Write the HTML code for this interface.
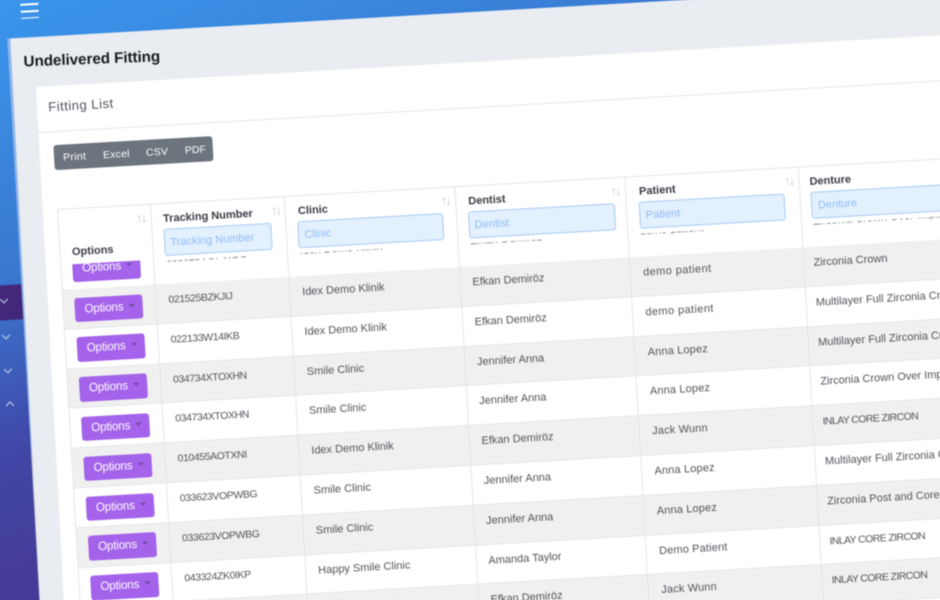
<!DOCTYPE html>
<html><head><meta charset="utf-8"><style>
html,body{margin:0;padding:0;width:940px;height:600px;overflow:hidden}
#s{position:relative;width:940px;height:600px;overflow:hidden;background:linear-gradient(159deg,#3a96ec 0,#3a78d0 29%,#4048a8 47%,#463a98 62%,#463a98 100%);font-family:"Liberation Sans",sans-serif}
#w{position:absolute;left:0;top:0;width:1300px;height:900px;transform-origin:0 0;transform:matrix(.9984,-.0572,.0572,.9984,0,0);filter:blur(.4px)}
#w div{position:absolute;box-sizing:border-box;white-space:nowrap}
.h{left:20px;width:18px;height:1.5px;background:#fff}
.r{left:45px;width:1200px;height:39.8px;border-bottom:1px solid #e4e6e9;background:#fff}
.g{background:#f0f0f0}
.b{left:11.7px;top:8.5px;width:68px;height:24.5px;background:#a463ea;border-radius:3px;color:#fff;font-size:11.5px;line-height:24px;padding-left:10px;letter-spacing:-.1px}
.b i{position:absolute;left:54px;top:9px;width:0;height:0;border:3.5px solid transparent;border-top:3.5px solid #6b4a9e;border-bottom:0}
.c{top:8px;line-height:16px;font-size:11px;color:#50545b;letter-spacing:0}
.c1{left:106px;font-size:10.5px;letter-spacing:-.4px}.c2{left:240px}.c3{left:410.5px}.c4{left:581.5px;letter-spacing:.15px}.c5{left:752.2px}
.u{font-size:10.5px;letter-spacing:-.6px}
.t{top:0;line-height:16px;font-size:11px;font-weight:bold;color:#373b44;letter-spacing:0}
.in{top:237.5px;height:27px;background:#e3f0fe;border:1px solid #a6cbf5;border-radius:3px;color:#8fbcf5;font-size:11px;line-height:26px;padding-left:5.5px;letter-spacing:0}
.ch{width:5.5px;height:5.5px;border-right:1px solid #c9d8f0;border-bottom:1px solid #c9d8f0;transform:rotate(45deg)}
.so{top:219px;font-size:13px;line-height:14px;color:#c6cacf;width:14px;text-align:center;letter-spacing:-2px}
.x{top:270px;width:140px;height:1.8px;overflow:hidden}
.x .c{left:0;top:-9.9px;color:#70747a}
</style></head><body><div id="s"><div id="w">
<div class="h" style="top:5px"></div><div class="h" style="top:12px"></div><div class="h" style="top:18.5px"></div>
<div style="left:-30px;top:285px;width:36px;height:35px;background:#42277a"></div>
<div class="ch" style="left:-16.5px;top:296px"></div>
<div class="ch" style="left:-16.5px;top:332px"></div>
<div class="ch" style="left:-16.5px;top:366px"></div>
<div class="ch" style="left:-16.5px;top:403px;transform:rotate(225deg)"></div>
<div style="left:5px;top:38.5px;width:3px;height:415px;background:#8fb4e6"></div>
<div style="left:4.5px;top:453px;width:1.5px;height:300px;background:#b9bcc4"></div>
<div style="left:4px;top:38.5px;width:1300px;height:900px;background:#e9ecf1;clip-path:polygon(4px 0,100% 0,100% 100%,0 100%)"></div>
<div style="left:19.5px;top:55px;font-size:15.2px;line-height:20px;font-weight:bold;color:#16181c;letter-spacing:-.05px;transform:rotate(1.1deg)">Undelivered Fitting</div>
<div style="left:28.5px;top:89px;width:1300px;height:900px;background:#fff;clip-path:polygon(2.5px 0,100% 0,100% 100%,0 100%)"></div>
<div style="left:30px;top:134px;width:1300px;height:1px;background:#e4e6ea"></div>
<div style="left:42px;top:100.5px;font-size:13.2px;line-height:18px;color:#4d5460;letter-spacing:.45px">Fitting List</div>
<div style="left:45px;top:148px;width:158.5px;height:25px;background:#6c757d;border-radius:3px"></div>
<div style="left:54px;top:153.5px;font-size:10.5px;line-height:15px;color:#fff;letter-spacing:.3px">Print</div>
<div style="left:94px;top:153.5px;font-size:10.5px;line-height:15px;color:#fff;letter-spacing:.2px">Excel</div>
<div style="left:137px;top:153.5px;font-size:10.5px;line-height:15px;color:#fff;letter-spacing:.2px">CSV</div>
<div style="left:176px;top:153.5px;font-size:10.5px;line-height:15px;color:#fff;letter-spacing:0">PDF</div>

<div style="left:0;top:293px;width:1300px;height:500px">
<div class="r g" style="top:0"><div class="b">Options<i></i></div><div class="c c1">021525BZKJIJ</div><div class="c c2">Idex Demo Klinik</div><div class="c c3">Efkan Demiröz</div><div class="c c4" style="letter-spacing:.4px">demo patient</div><div class="c c5">Zirconia Crown</div></div>
<div class="r" style="top:39.8px"><div class="b">Options<i></i></div><div class="c c1">022133W14IKB</div><div class="c c2">Idex Demo Klinik</div><div class="c c3">Efkan Demiröz</div><div class="c c4" style="letter-spacing:.4px">demo patient</div><div class="c c5">Multilayer Full Zirconia Crown</div></div>
<div class="r g" style="top:79.6px"><div class="b">Options<i></i></div><div class="c c1">034734XTOXHN</div><div class="c c2">Smile Clinic</div><div class="c c3">Jennifer Anna</div><div class="c c4">Anna Lopez</div><div class="c c5">Multilayer Full Zirconia Crown</div></div>
<div class="r" style="top:119.4px"><div class="b">Options<i></i></div><div class="c c1">034734XTOXHN</div><div class="c c2">Smile Clinic</div><div class="c c3">Jennifer Anna</div><div class="c c4">Anna Lopez</div><div class="c c5">Zirconia Crown Over Implant</div></div>
<div class="r g" style="top:159.2px"><div class="b">Options<i></i></div><div class="c c1">010455AOTXNI</div><div class="c c2">Idex Demo Klinik</div><div class="c c3">Efkan Demiröz</div><div class="c c4">Jack Wunn</div><div class="c c5 u">INLAY CORE ZIRCON</div></div>
<div class="r" style="top:199px"><div class="b">Options<i></i></div><div class="c c1">033623VOPWBG</div><div class="c c2">Smile Clinic</div><div class="c c3">Jennifer Anna</div><div class="c c4">Anna Lopez</div><div class="c c5">Multilayer Full Zirconia Crown</div></div>
<div class="r g" style="top:238.8px"><div class="b">Options<i></i></div><div class="c c1">033623VOPWBG</div><div class="c c2">Smile Clinic</div><div class="c c3">Jennifer Anna</div><div class="c c4">Anna Lopez</div><div class="c c5">Zirconia Post and Core</div></div>
<div class="r" style="top:278.6px"><div class="b">Options<i></i></div><div class="c c1">043324ZK0IKP</div><div class="c c2">Happy Smile Clinic</div><div class="c c3">Amanda Taylor</div><div class="c c4">Demo Patient</div><div class="c c5 u">INLAY CORE ZIRCON</div></div>
<div class="r g" style="top:318.4px"><div class="b">Options<i></i></div><div class="c c1">010455AOTXNI</div><div class="c c2">Idex Demo Klinik</div><div class="c c3">Efkan Demiröz</div><div class="c c4">Jack Wunn</div><div class="c c5 u">INLAY CORE ZIRCON</div></div>
</div>

<div style="left:45px;top:212px;width:1200px;height:81px;background:#fff;border-top:1px solid #e2e5e8"></div>
<div style="left:56.7px;top:267.5px;width:68px;height:18px;overflow:hidden;background:#a463ea;border-radius:0 0 3px 3px;color:#fff;font-size:11.5px;line-height:24px"><div style="left:10px;top:-6.3px;letter-spacing:-.1px">Options</div><div style="left:54px;top:2.5px;width:0;height:0;border:3.5px solid transparent;border-top:3.5px solid #6b4a9e;border-bottom:0"></div></div>

<div style="left:45px;top:212px;width:1px;height:500px;background:#e2e5e8"></div>
<div style="left:138.2px;top:212px;width:1px;height:500px;background:#e2e5e8"></div>
<div style="left:272.2px;top:212px;width:1px;height:500px;background:#e2e5e8"></div>
<div style="left:442.6px;top:212px;width:1px;height:500px;background:#e2e5e8"></div>
<div style="left:612.8px;top:212px;width:1px;height:500px;background:#e2e5e8"></div>
<div style="left:787px;top:212px;width:1px;height:500px;background:#e2e5e8"></div>

<div class="t" style="left:57.5px;top:247.5px">Options</div>
<div class="t" style="left:150.3px;top:220px">Tracking Number</div>
<div class="t" style="left:285.4px;top:220px">Clinic</div>
<div class="t" style="left:456px;top:220px">Dentist</div>
<div class="t" style="left:627px;top:220px">Patient</div>
<div class="t" style="left:797.8px;top:220px">Denture</div>
<div class="so" style="left:121px">↑↓</div>
<div class="so" style="left:256px">↑↓</div>
<div class="so" style="left:426px">↑↓</div>
<div class="so" style="left:596px">↑↓</div>
<div class="so" style="left:770px">↑↓</div>
<div class="in" style="left:149.8px;width:108px">Tracking Number</div>
<div class="in" style="left:284px;width:145.5px">Clinic</div>
<div class="in" style="left:454.5px;width:147px">Dentist</div>
<div class="in" style="left:626px;width:146px">Patient</div>
<div class="in" style="left:798.4px;width:147px">Denture</div>

<div class="x" style="left:150.7px"><div class="c" style="letter-spacing:-.4px">033623VOPWBG</div></div>
<div class="x" style="left:285px"><div class="c">Idex Demo Klinik</div></div>
<div class="x" style="left:455.5px"><div class="c">Efkan Demiröz</div></div>
<div class="x" style="left:625.5px"><div class="c">demo patient</div></div>
<div class="x" style="left:799px"><div class="c">Zirconia Crown Over Implant</div></div>
</div></div></body></html>
